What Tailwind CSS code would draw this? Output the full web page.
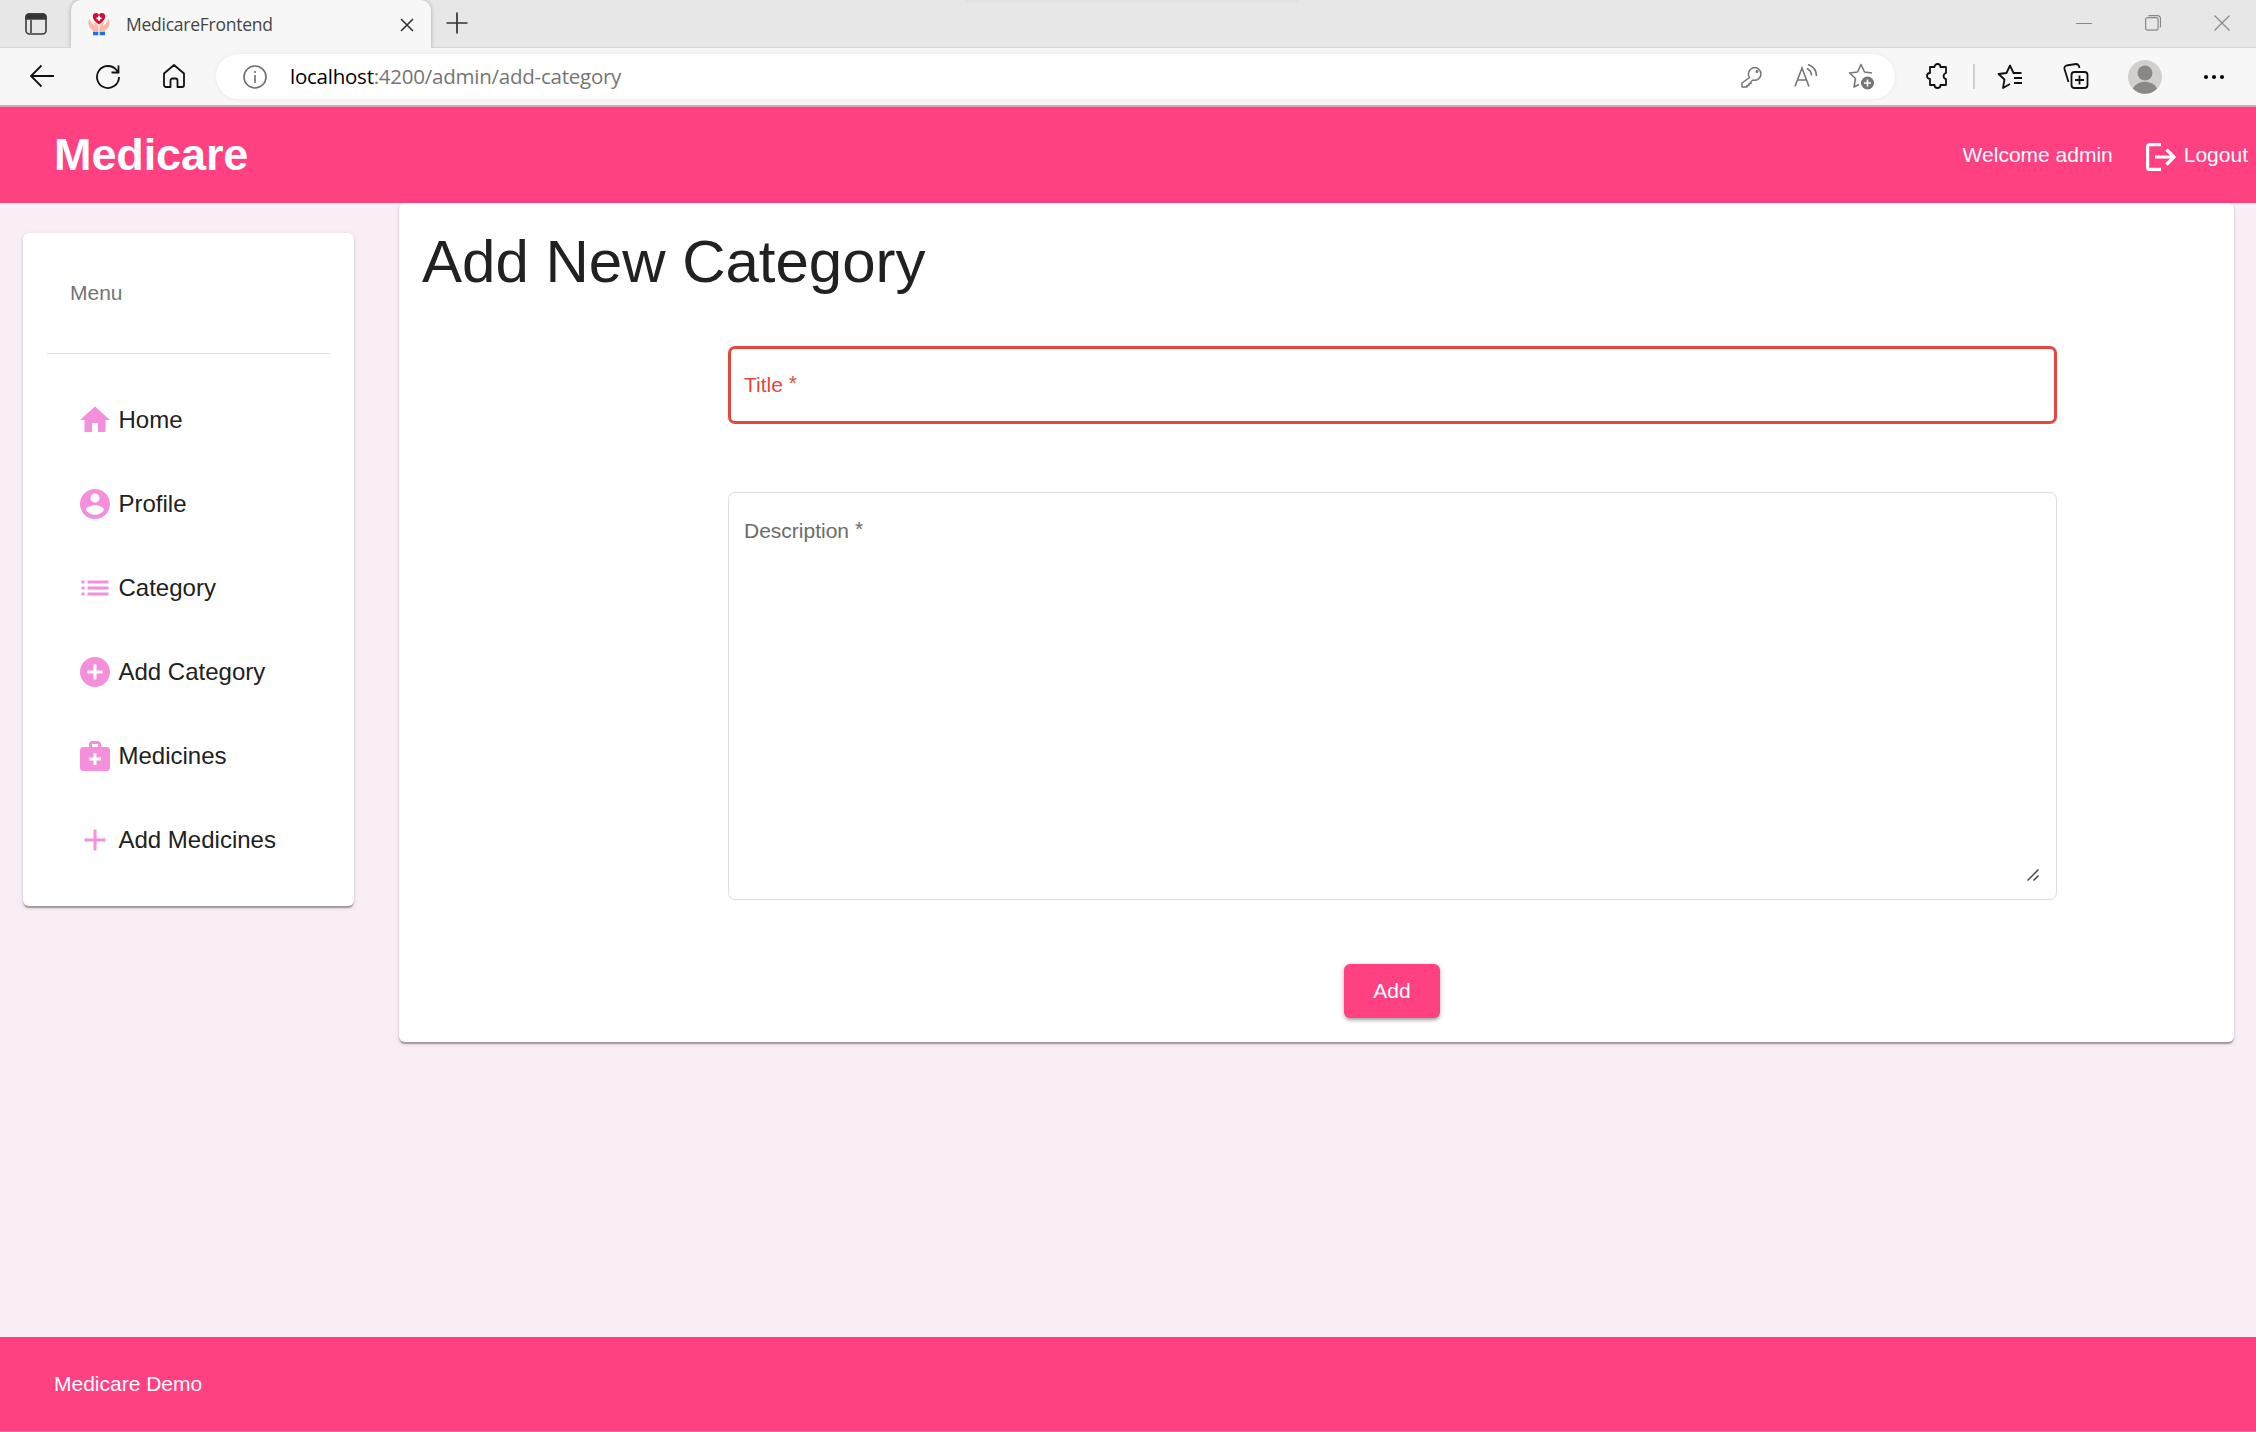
<!DOCTYPE html>
<html lang="en">
<head>
<meta charset="utf-8">
<title>MedicareFrontend</title>
<script src="https://cdn.jsdelivr.net/npm/@tailwindcss/browser@4"></script>
</head>
<body class="h-[1432px] w-[2256px] overflow-hidden bg-[#faeef6] font-['Liberation_Sans',Arial,sans-serif] text-[21px] text-[#212121]">
<div class="flex h-full flex-col">

  <!-- Browser tab strip -->
  <div class="relative flex h-12 shrink-0 items-center bg-[#e7e7e7] font-['Open_Sans','Noto_Sans',sans-serif] shadow-[inset_0_-1px_0_#d6d6d6]">
    <div class="absolute top-0 left-[965px] h-1 w-[334px] bg-linear-to-b from-[#dfdfdf] to-[#e7e7e7]"></div>
    <svg class="ml-6 h-6 w-6" viewBox="0 0 24 24" fill="none" stroke="#3b3b3b" stroke-width="1.6"><rect x="2" y="2" width="20" height="20" rx="3.500"/><path d="M2 7V5a3 3 0 0 1 3-3h14a3 3 0 0 1 3 3v2z" fill="#333"/><path d="M7 8v13"/></svg>
    <div class="ml-[23px] flex h-full w-[360px] items-center rounded-t-[10px] bg-[#f7f7f7] shadow-[0_0_4px_#0004] [clip-path:inset(0_-6px_0_-6px)]">
      <svg class="ml-4 h-6 w-6" viewBox="0 0 24 24"><path d="M2.500 7C0 11 2 16 6 18.500V20h5.500v-4c0-3-2-5-4.500-6l1 4C5 12 4.500 10 2.500 7zM21.500 7c2.500 4 .5 9-3.500 11.500V20h-5.500v-4c0-3 2-5 4.500-6l-1 4c3-2 3.500-4 5.500-7z" fill="#fbb9a5"/><path d="M12 12.500C8 9.500 5.800 7.500 5.800 4.500c0-4 4.700-4.500 6.200-1.500 1.500-3 6.200-2.500 6.200 1.500 0 3-2.200 5-6.200 8z" fill="#d0103a"/><path d="M12 3.800v5M9.500 6.300h5" stroke="#fff" stroke-width="1.800"/><path d="M6 20h5.300v3.300H6zM12.700 20H18v3.300h-5.300z" fill="#1f6fe0"/></svg>
      <span class="-mt-px ml-[15px] w-[146px] text-[17.500px] leading-6 tracking-[-0.25px] whitespace-nowrap text-[#444]">MedicareFrontend</span>
      <svg class="mt-0.5 mr-[17px] ml-auto h-[14px] w-[14px]" viewBox="0 0 14 14" stroke="#333" stroke-width="1.6"><path d="M1 1l12 12M13 1L1 13"/></svg>
    </div>
    <svg class="-mt-0.5 ml-[15px] h-[22px] w-[22px]" viewBox="0 0 22 22" stroke="#333" stroke-width="1.7"><path d="M11 .5v21M.5 11h21"/></svg>
    <svg class="-mt-0.5 mr-[53px] ml-auto h-[16px] w-[16px]" viewBox="0 0 16 16" stroke="#888"><path d="M0 8.500h16"/></svg>
    <svg class="-mt-0.5 mr-[53px] h-[16px] w-[16px]" viewBox="0 0 16 16" fill="none" stroke="#888" stroke-width="1.200"><rect x=".6" y="2.600" width="12.500" height="12.500" rx="2"/><path d="M3.500.6h9a3 3 0 0 1 3 3v9"/></svg>
    <svg class="-mt-0.5 mr-[26px] h-[16px] w-[16px]" viewBox="0 0 16 16" stroke="#888" stroke-width="1.200"><path d="M.5.5l15 15M15.500.5l-15 15"/></svg>
  </div>

  <!-- Browser toolbar -->
  <div class="relative z-10 flex h-[57px] shrink-0 items-center bg-[#f7f7f7] font-['Open_Sans','Noto_Sans',sans-serif]">
    <svg class="-mt-px ml-[30px] h-6 w-6" viewBox="0 0 24 24" fill="none" stroke="#111" stroke-width="1.800"><path d="M24 12H1M11.500 1.500L1 12l10.500 10.500"/></svg>
    <svg class="ml-[42px] h-6 w-6" viewBox="0 0 24 24" fill="none" stroke="#111" stroke-width="1.800"><path d="M23 12A11 11 0 1 1 20.500 5l2 2.500M22.500.5v7h-7"/></svg>
    <svg class="-mt-px ml-[42px] h-6 w-6" viewBox="0 0 24 24" fill="none" stroke="#111" stroke-width="1.800" stroke-linejoin="round"><path d="M2 9.500L12 1l10 8.500V21a2 2 0 0 1-2 2h-4.500v-6.500a2 2 0 0 0-2-2h-3a2 2 0 0 0-2 2V23H4a2 2 0 0 1-2-2z"/></svg>
    <div class="ml-[30px] flex h-[45px] w-[1679px] items-center rounded-full bg-white shadow-[0_0_5px_#0001]">
      <svg class="ml-[27px] h-6 w-6" viewBox="0 0 24 24" fill="none" stroke="#6e6e6e" stroke-width="1.600"><circle cx="12" cy="12" r="11"/><path d="M12 10v8M12 6v2"/></svg>
      <span class="-mt-0.5 ml-[23px] text-[20.500px] leading-7 tracking-[-0.24px] whitespace-nowrap text-[#757575]"><span class="text-black">localhost</span>:4200/admin/add-category</span>
      <svg class="mr-[31px] ml-auto h-[22px] w-[22px]" viewBox="0 0 22 22" fill="none" stroke="#767676" stroke-width="1.500"><path d="M8.500 11.500A6.300 6.300 0 1 1 12 14l-2 1.500v2H8v2H6V21H1v-4z" stroke-linejoin="round"/><circle cx="16" cy="5.500" r=".8"/></svg>
      <svg class="-mt-0.5 mr-[30px] h-6 w-6" viewBox="0 0 24 24" fill="none" stroke="#767676" stroke-width="1.600"><path d="M1 22.500L8 4l7 18.500M3.500 16h9M13 4.500c3 1.500 4.500 4 4.500 7M14 .5c5.500 2 8.500 6 8.500 11.500"/></svg>
      <svg class="mr-5 h-[27px] w-[27px]" viewBox="0 0 27 27" fill="none" stroke="#767676" stroke-width="1.600" stroke-linejoin="round"><path d="M24 10l-7.500-1L13 1.500 9.500 9l-8 1 6 5.500L6 24l5-2.500"/><circle cx="19.500" cy="20" r="6.500" fill="#767676" stroke="none"/><path d="M19.500 16.500v7M16 20h7" stroke="#fff"/></svg>
    </div>
    <svg class="-mt-px ml-[31px] h-[26px] w-[22px]" viewBox="0 0 22 26" fill="none" stroke="#111" stroke-width="1.800" stroke-linejoin="round"><path d="M4 4h4.500a3 3 0 0 1 6 0H20v6a3.200 3.200 0 0 0 0 6.200V22h-5.500a3 3 0 0 1-6 0H4v-6a3 3 0 0 1 0-6z"/></svg>
    <div class="ml-[25px] h-[25px] w-0.5 bg-[#cfcfcf]"></div>
    <svg class="ml-[22px] h-[26px] w-[26px]" viewBox="0 0 26 26" fill="none" stroke="#111" stroke-width="1.800" stroke-linejoin="round"><path d="M24.500 9H16.500L13 1.500 9.500 9l-8 1 6 5.500L6 24l7-4M17 14h8M17 19h8"/></svg>
    <svg class="-mt-px ml-[40px] h-[26px] w-[26px]" viewBox="0 0 26 26" fill="none" stroke="#111" stroke-width="1.800" stroke-linejoin="round"><path d="M5.500 19L1.500 6a3 3 0 0 1 2-3.500L13 1c2 0 3 1 3.500 4"/><rect x="8.500" y="9" width="16" height="16" rx="3"/><path d="M16.500 12.500v9M12 17h9"/></svg>
    <svg class="ml-[39px] h-[34px] w-[34px]" viewBox="0 0 34 34"><circle cx="17" cy="17" r="17" fill="#d2d0ce"/><circle cx="17" cy="13" r="7.500" fill="#8a8886"/><path d="M5 28.500C9 19.500 25 19.500 29 28.500c-6 7-18 7-24 0z" fill="#8a8886"/></svg>
    <svg class="ml-[42px] h-1 w-5" viewBox="0 0 20 4"><circle cx="2" cy="2" r="2"/><circle cx="10" cy="2" r="2"/><circle cx="18" cy="2" r="2"/></svg>
  </div>
  <div class="h-0.5 shrink-0 bg-[#d9a3b7]"></div>

  <!-- App toolbar -->
  <header class="flex h-24 shrink-0 items-center bg-[#ff4081] pr-2 pl-[54px] leading-6 text-white">
    <h1 class="text-[45px] leading-[48px] font-bold tracking-[-0.1px]">Medicare</h1>
    <span class="ml-auto">Welcome admin</span>
    <svg class="mt-1 ml-[33px] h-7 w-[30px]" viewBox="0 0 30 28" fill="none" stroke="currentColor" stroke-width="3.200"><path d="M15 1.600H3.500a1.900 1.900 0 0 0-1.900 1.900v21a1.900 1.900 0 0 0 1.900 1.900H15M9 14h19M20.500 6.500L28 14l-7.500 7.500"/></svg>
    <span class="ml-[8px]">Logout</span>
  </header>

  <!-- Content -->
  <div class="flex h-[1134px] shrink-0 items-start">
    <nav class="mt-[30px] ml-[23px] h-[673px] w-[331px] rounded-md bg-white px-6 shadow-[0_3px_1.5px_-1.5px_#0003,0_1.5px_1.5px_0_#00000024,0_1.5px_4.5px_0_#0000001f]">
      <div class="flex h-[121px] items-center border-b border-[#e0e0e0] pl-[23px] text-[#757575]">Menu</div>
      <ul class="mt-6 flex flex-col text-2xl">
        <li class="flex h-[84px] items-center gap-[6px] pl-[29.5px]"><svg class="h-9 w-9 fill-[#f48fdc]" viewBox="0 0 24 24"><path d="M10 20v-6h4v6h5v-8h3L12 3 2 12h3v8z"/></svg>Home</li>
        <li class="flex h-[84px] items-center gap-[6px] pl-[29.5px]"><svg class="h-9 w-9 fill-[#f48fdc]" viewBox="0 0 24 24"><path d="M12 2C6.480 2 2 6.480 2 12s4.480 10 10 10 10-4.480 10-10S17.520 2 12 2zm0 3c1.660 0 3 1.340 3 3s-1.340 3-3 3-3-1.340-3-3 1.340-3 3-3zm0 14.200c-2.500 0-4.710-1.280-6-3.220.03-1.990 4-3.080 6-3.080 1.990 0 5.970 1.090 6 3.080-1.290 1.940-3.500 3.220-6 3.220z"/></svg>Profile</li>
        <li class="flex h-[84px] items-center gap-[6px] pl-[29.5px]"><svg class="h-9 w-9 fill-[#f48fdc]" viewBox="0 0 24 24"><path d="M3 13h2v-2H3v2zm0 4h2v-2H3v2zm0-8h2V7H3v2zm4 4h14v-2H7v2zm0 4h14v-2H7v2zM7 7v2h14V7H7z"/></svg>Category</li>
        <li class="flex h-[84px] items-center gap-[6px] pl-[29.5px]"><svg class="h-9 w-9 fill-[#f48fdc]" viewBox="0 0 24 24"><path d="M12 2C6.480 2 2 6.480 2 12s4.480 10 10 10 10-4.480 10-10S17.520 2 12 2zm5 11h-4v4h-2v-4H7v-2h4V7h2v4h4v2z"/></svg>Add Category</li>
        <li class="flex h-[84px] items-center gap-[6px] pl-[29.5px]"><svg class="h-9 w-9 fill-[#f48fdc]" viewBox="0 0 24 24"><path d="M20 6h-4V4c0-1.100-.9-2-2-2h-4c-1.100 0-2 .9-2 2v2H4c-1.100 0-2 .9-2 2v12c0 1.100.9 2 2 2h16c1.100 0 2-.9 2-2V8c0-1.100-.9-2-2-2zM10 4h4v2h-4V4zm6 11h-3v3h-2v-3H8v-2h3v-3h2v3h3v2z"/></svg>Medicines</li>
        <li class="flex h-[84px] items-center gap-[6px] pl-[29.5px]"><svg class="h-9 w-9 fill-[#f48fdc]" viewBox="0 0 24 24"><path d="M19 13h-6v6h-2v-6H5v-2h6V5h2v6h6v2z"/></svg>Add Medicines</li>
      </ul>
    </nav>

    <main class="ml-[45px] flex h-[839px] w-[1835px] flex-col rounded-md bg-white shadow-[0_3px_1.5px_-1.5px_#0003,0_1.5px_1.5px_0_#00000024,0_1.5px_4.5px_0_#0000001f]">
      <h2 class="mt-[23px] ml-[23px] text-[60px] leading-[72px]">Add New Category</h2>
      <form class="ml-[329px] flex w-[1329px] flex-col">
        <div class="mt-[48px] flex h-[78px] items-center rounded-[7px] border-3 border-[#e5463d] pl-[13px] whitespace-pre text-[#e5463d]">Title <span class="-mt-1">*</span></div>
        <div class="relative mt-[68px] flex h-[408px] items-start rounded-[7px] border border-[#dedede] pt-[25px] pl-[15px] leading-[26px] whitespace-pre text-[#6b6b6b]">Description <span class="-mt-0.5">*</span><svg class="absolute right-[17px] bottom-[18px] h-3 w-3" viewBox="0 0 12 12" stroke="#444" stroke-width="1.500"><path d="M.5 11.500l11-11M6.500 11.500l5-5"/></svg></div>
        <button type="button" class="mt-16 mr-px h-[54px] w-24 self-center rounded-md bg-[#ff4081] text-white shadow-[0_3px_3px_-1px_#0003,0_2px_4px_#00000024,0_1px_7px_#0000001f]">Add</button>
      </form>
    </main>
  </div>

  <footer class="flex h-[94px] shrink-0 items-center bg-[#ff4081] pl-[54px] text-white">Medicare Demo</footer>
  <div class="h-px shrink-0 bg-[#dc7f9f]"></div>
</div>
</body>
</html>
